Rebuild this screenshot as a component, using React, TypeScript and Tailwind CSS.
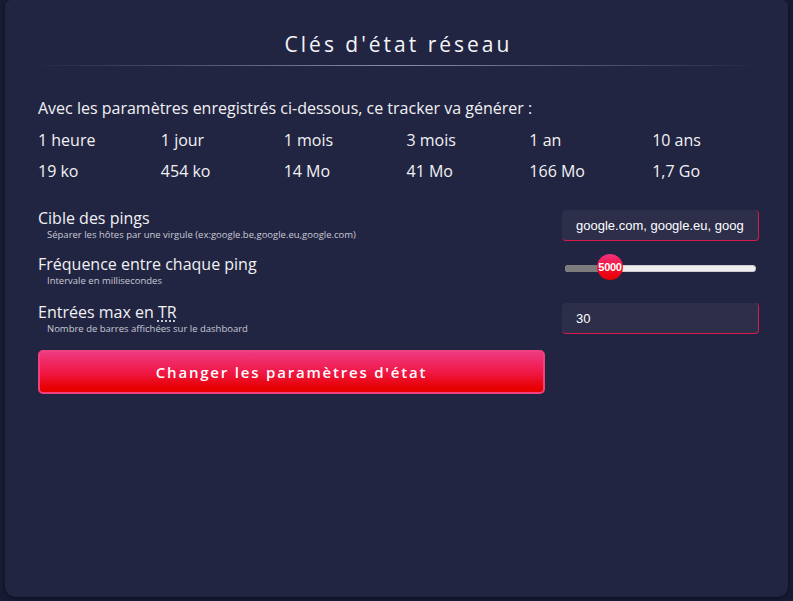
import React from "react";

const periods = ["1 heure", "1 jour", "1 mois", "3 mois", "1 an", "10 ans"];
const sizes = ["19 ko", "454 ko", "14 Mo", "41 Mo", "166 Mo", "1,7 Go"];

export default function App() {
  return (
    <div className="w-[793px] h-[601px] bg-[#161a33] px-[5px] pb-[4px] overflow-hidden" style={{ fontFamily: '"Open Sans", sans-serif' }}>
      <div className="h-full bg-[#222542] rounded-b-[10px] rounded-t-[6px] shadow-[0_1px_3px_rgba(0,0,0,0.5)] pt-[28px] pl-[33px] pr-[29px] text-[#f1f1f4]">
        <h1 className="text-center text-[21px] tracking-[3px] leading-[32px] text-[#f4f4f8] font-normal">Clés d'état réseau</h1>
        <div className="mt-[5px] -ml-[8px] mr-[-2px] h-px bg-[linear-gradient(90deg,rgba(140,140,170,0)_0%,#8b8da6_50%,rgba(140,140,170,0)_100%)]" />
        <p className="mt-[31px] text-[16px] leading-[22px] whitespace-nowrap">Avec les paramètres enregistrés ci-dessous, ce tracker va générer :</p>
        <div className="mt-[10px] grid grid-cols-6 w-[737px] text-[16px] leading-[22px] gap-y-[9px]">
          {periods.map((p) => (
            <div key={p} className="whitespace-nowrap">{p}</div>
          ))}
          {sizes.map((s) => (
            <div key={s} className="whitespace-nowrap">{s}</div>
          ))}
        </div>
        <div className="mt-[26px] flex flex-col">
          <div className="flex justify-between items-start">
            <div>
              <div className="text-[16px] leading-[20px]">Cible des pings</div>
              <div className="ml-[9px] text-[9.5px] leading-[14px] text-[#c9cad6]">Séparer les hôtes par une virgule (ex:google.be,google.eu,google.com)</div>
            </div>
            <input
              readOnly
              value="google.com, google.eu, google.fr"
              className="mt-[2px] w-[197px] h-[31px] rounded-[4px] bg-[#2c2e4a] border-0 border-r border-b border-[#d81b4a] px-[14px] text-[13px] text-white outline-none"
              style={{ fontFamily: '"Liberation Sans", Arial, sans-serif' }}
            />
          </div>
          <div className="mt-[12px] flex justify-between items-start">
            <div>
              <div className="text-[16px] leading-[20px]">Fréquence entre chaque ping</div>
              <div className="ml-[9px] text-[9.5px] leading-[14px] text-[#c9cad6]">Intervale en millisecondes</div>
            </div>
            <div className="w-[197px] h-[30px] relative">
              <div className="absolute left-[3px] right-[3px] top-[11px] h-[7px] rounded-full bg-[#eeeeee] border border-[#9a9aa5]/40" />
              <div className="absolute left-[3px] w-[40px] top-[11px] h-[7px] rounded-l-full bg-[#7c7c7c]" />
              <div className="absolute left-[35px] top-[0px] w-[26px] h-[26px] rounded-full bg-[linear-gradient(180deg,#ee3480_0%,#f20a2a_60%,#e60000_100%)] flex items-center justify-center">
                <span className="text-[11px] font-bold text-white tracking-[-0.3px]" style={{ fontFamily: '"Liberation Sans", Arial, sans-serif' }}>5000</span>
              </div>
            </div>
          </div>
          <div className="mt-[14px] flex justify-between items-start">
            <div>
              <div className="text-[16px] leading-[20px]">
                Entrées max en <span className="underline decoration-dotted underline-offset-[3px]">TR</span>
              </div>
              <div className="ml-[9px] text-[9.5px] leading-[14px] text-[#c9cad6]">Nombre de barres affichées sur le dashboard</div>
            </div>
            <input
              readOnly
              value="30"
              className="mt-[1px] w-[197px] h-[31px] rounded-[4px] bg-[#2c2e4a] border-0 border-r border-b border-[#d81b4a] px-[14px] text-[13px] text-white outline-none"
              style={{ fontFamily: '"Liberation Sans", Arial, sans-serif' }}
            />
          </div>
          <button className="mt-[14px] w-[507px] h-[44px] rounded-[5px] border-2 border-[#f0407f] bg-[linear-gradient(180deg,#ee3a80_0%,#f01848_50%,#e60000_90%)] text-white text-[15px] font-semibold tracking-[1.8px] flex items-center justify-center">
            Changer les paramètres d'état
          </button>
        </div>
      </div>
    </div>
  );
}
